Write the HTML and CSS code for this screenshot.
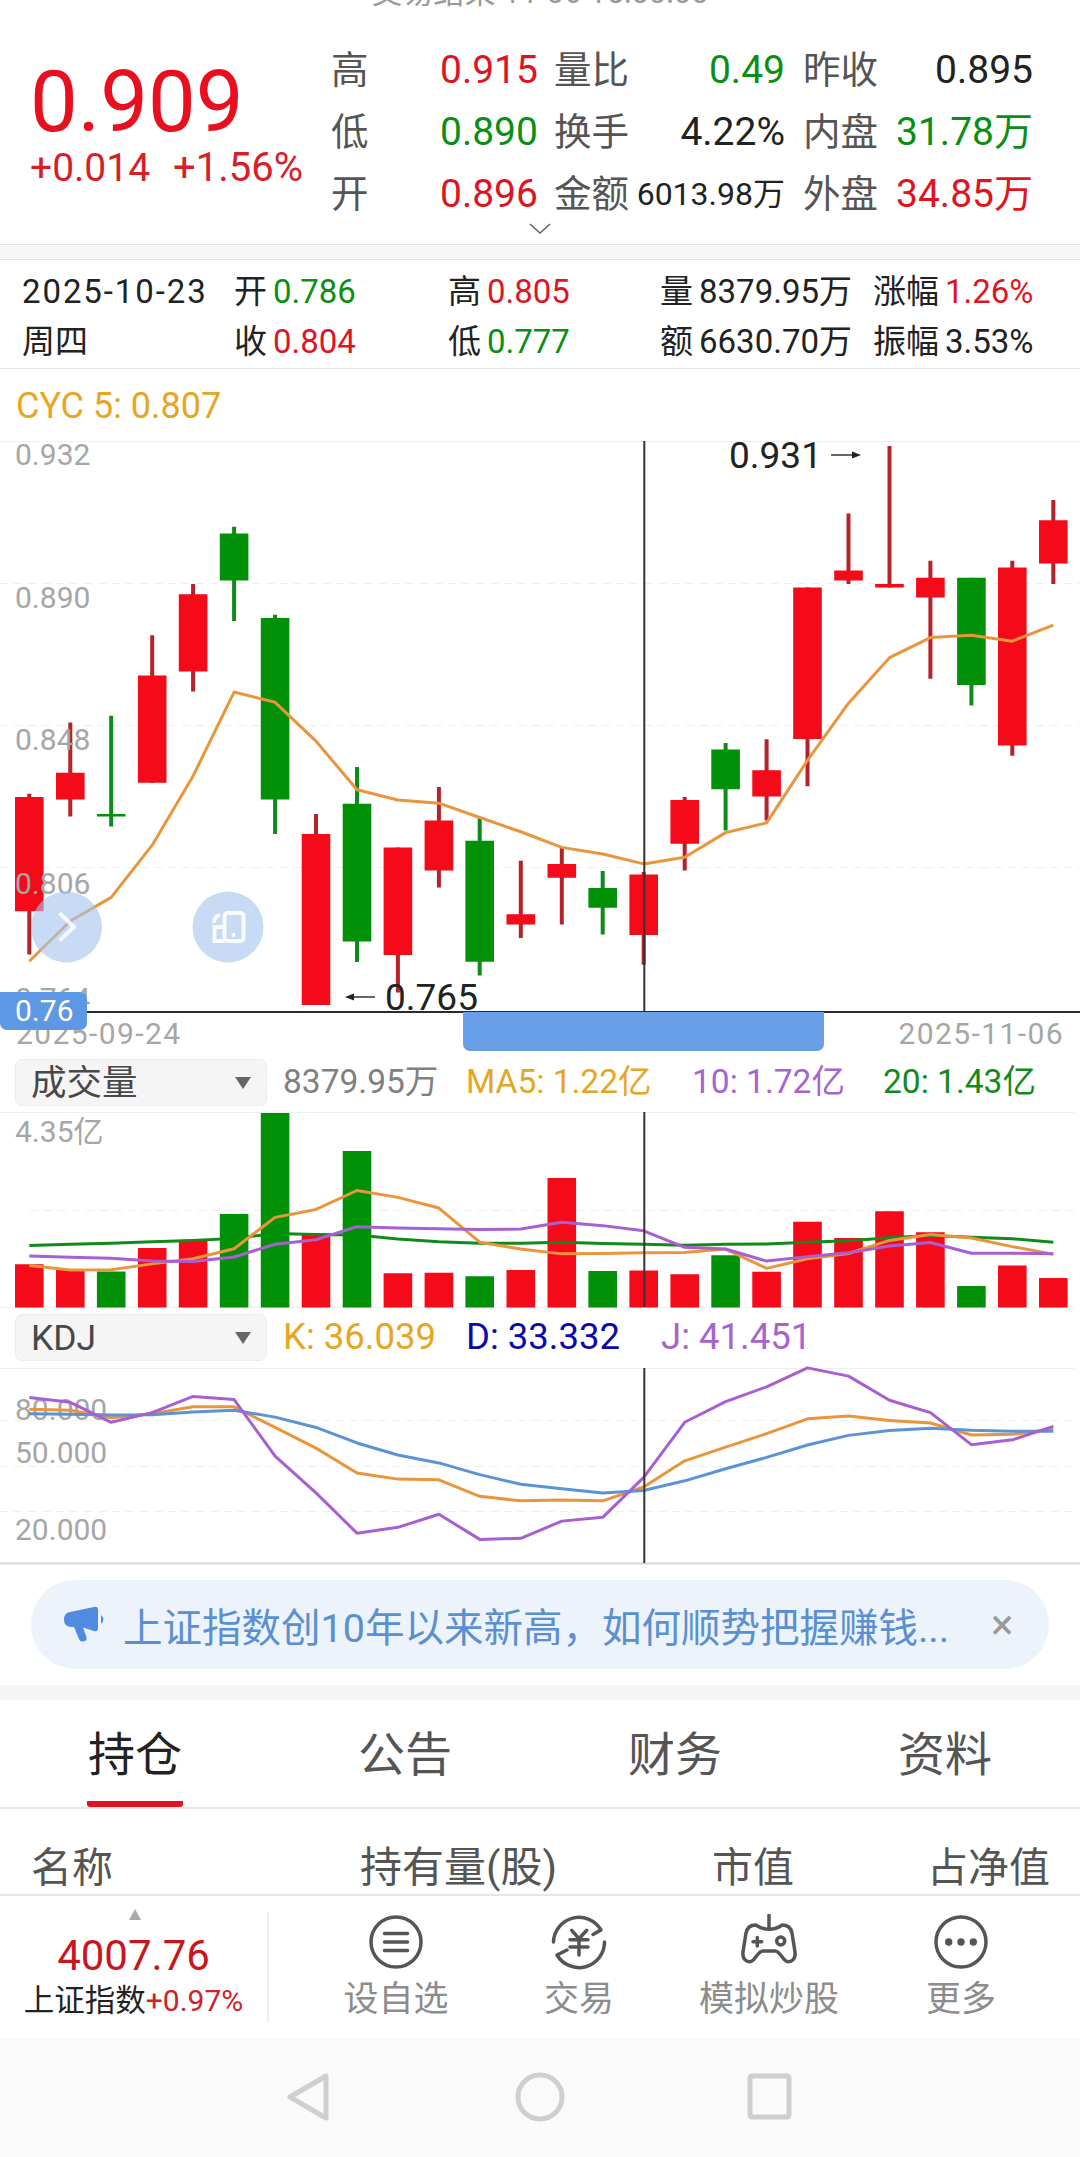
FILE: index.html
```html
<!DOCTYPE html>
<html lang="zh-CN">
<head>
<meta charset="utf-8">
<title>行情</title>
<link rel="stylesheet" href="styles.css">
</head>
<body>
<div class="page">
  <div class="status"><span>交易结束 11-06 15:00:00</span></div>
  <section class="quote">
    <div class="quote-main">
      <div class="price-block">
        <div class="price">0.909</div>
        <div class="change"><span>+0.014</span><span>+1.56%</span></div>
      </div>
      <div class="quote-grid">
        <span class="lbl">高</span><span class="val up">0.915</span><span class="lbl">量比</span><span class="val r down">0.49</span><span class="lbl">昨收</span><span class="val r">0.895</span>
        <span class="lbl">低</span><span class="val down">0.890</span><span class="lbl">换手</span><span class="val r">4.22%</span><span class="lbl">内盘</span><span class="val r down">31.78万</span>
        <span class="lbl">开</span><span class="val up">0.896</span><span class="lbl">金额</span><span class="val r small">6013.98万</span><span class="lbl">外盘</span><span class="val r up">34.85万</span>
      </div>
    </div>
    <svg class="chevron" width="22" height="11" viewBox="0 0 22 11"><path d="M1 1l10 9 10-9" fill="none" stroke="#666" stroke-width="1.6"/></svg>
  </section>
  <div class="band"></div>
  <section class="ohlc">
    <span>2025-10-23</span><span>开<b class="down">0.786</b></span><span>高<b class="up">0.805</b></span><span>量<b>8379.95万</b></span><span>涨幅<b class="up">1.26%</b></span>
    <span>周四</span><span>收<b class="up">0.804</b></span><span>低<b class="down">0.777</b></span><span>额<b>6630.70万</b></span><span>振幅<b>3.53%</b></span>
  </section>
  <div class="cyc">CYC 5: 0.807</div>
  <section class="price-pane">
    <svg class="chart main-chart" width="1080" height="571" viewBox="0 0 1080 571">
      <path class="grid-solid" d="M0 .5H1080"/>
      <path class="grid-dash" d="M0 142.5H1080M0 284.5H1080M0 426.5H1080"/>
      <g transform="translate(0 -11) scale(1 .4464)">
        <path class="wick-up" d="M29.3 815V1175M70.3 655V866M152.2 460V790M193.1 345V586M316 860V1288M397.9 935V1260M438.9 800V1025M520.8 965V1138M561.8 935V1108M643.7 990V1198M684.7 822V987M766.6 693V875M807.5 353V798M848.5 187V345M889.5 36V353M930.4 293V557M1012.3 293V730M1053.3 157V345"/>
        <path class="wick-down" d="M111.2 640V888M234.1 217V428M275.1 414V905M357 755V1192M479.7 870V1222M602.7 988V1130M725.6 701V897M971.4 331V617"/>
        <path class="body-up" d="M29.3 822V1078M70.3 768V828M152.2 550V790M193.1 368V541M316 905V1288M397.9 935V1176M438.9 875V987M520.8 1085V1108M561.8 972V1003M643.7 996V1131M684.7 829V927M766.6 762V821M807.5 353V692M848.5 315V337M889.5 345V353M930.4 331V375M1012.3 308V707M1053.3 202V299"/>
        <path class="body-down" d="M111.2 860V866M234.1 232V337M275.1 421V828M357 837V1146M479.7 920V1191M602.7 1026V1070M725.6 716V805M971.4 331V571"/>
        <polyline class="line ma5" points="29.3,1190 70.3,1100 111.2,1047 152.2,930 193.1,775 234.1,587 275.1,610 316,697 357,806 397.9,829 438.9,836 479.7,868 520.8,900 561.8,935 602.7,950 643.7,972 684.7,957 725.6,902 766.6,880 807.5,740 848.5,612 889.5,510 930.4,465 971.4,460 1012.3,473 1053.3,437"/>
      </g>
      <path class="cursor" d="M644.3 0V570"/>
      <text class="axis-text" x="15" y="24">0.932</text>
      <text class="axis-text" x="15" y="167">0.890</text>
      <text class="axis-text" x="15" y="309">0.848</text>
      <text class="axis-text" x="15" y="453">0.806</text>
      <text class="axis-text" x="15" y="568">0.764</text>
      <circle class="fab" cx="66.500" cy="486" r="35.500"/>
      <circle class="fab" cx="228" cy="486" r="35.500"/>
      <path class="fab-mark" d="M59.500 472l14.500 14-14.500 13.500"/>
      <g class="fab-icon">
        <rect x="224.500" y="472" width="19" height="28" rx="3"/>
        <path d="M224.500 486h-10v14h10"/>
        <path d="M214 482c0-4 2-7 6-8"/>
      </g>
      <circle class="fab-dot" cx="233.500" cy="494" r="2"/>
      <text class="note" x="385" y="569">0.765</text>
      <path class="note-line" d="M347 556H375"/>
      <path class="note-head" d="M345 556l9-3.500v7z"/>
      <text class="note" x="729" y="27">0.931</text>
      <path class="note-line" d="M831 14H859"/>
      <path class="note-head" d="M861 14l-9-3.500v7z"/>
      <path class="axis-line" d="M0 571H1080"/>
    </svg>
    <div class="axis-row">
      <span>2025-09-24</span>
      <span>2025-11-06</span>
      <div class="thumb"></div>
    </div>
    <div class="badge">0.76</div>
  </section>
  <div class="pane-head">
    <div class="select"><span>成交量</span><i class="caret"></i></div>
    <span class="pane-vals">
      <span class="v1 gray">8379.95万</span><span class="v2 orange">MA5: 1.22亿</span><span class="v3 purple">10: 1.72亿</span><span class="v4 green">20: 1.43亿</span>
    </span>
  </div>
  <svg class="chart" width="1080" height="196" viewBox="0 0 1080 196">
    <path class="grid-solid" d="M0 .5H1074M0 195.5H1074"/>
    <path class="grid-dash" d="M30 98.5H1074"/>
    <g transform="translate(0 -72) scale(1 .3444)">
      <path class="body-up" d="M29.3 651V777M70.3 668V777M152.2 604V777M193.1 580V777M316 565V777M397.9 677V777M438.9 676V777M520.8 668V777M561.8 401V777M643.7 669V777M684.7 680V777M766.6 673V777M807.5 528V777M848.5 575V777M889.5 497V777M930.4 558V777M1012.3 655V777M1053.3 691V777"/>
      <polyline class="line ma20" points="29.3,597 70.3,593 111.2,590 152.2,586 193.1,582 234.1,576 275.1,562 316,565 357,566 397.9,578 438.9,586 479.7,590 520.8,590 561.8,587 602.7,591 643.7,593 684.7,596 725.6,593 766.6,592 807.5,587 848.5,583 889.5,574 930.4,568 971.4,573 1012.3,577 1053.3,587"/>
      <path class="body-down" d="M111.2 672V777M234.1 505V777M275.1 212V777M357 322V777M479.7 686V777M602.7 671V777M725.6 625V777M971.4 714V777"/>
      <polyline class="line ma5" points="29.3,655 70.3,668 111.2,667 152.2,650 193.1,635 234.1,606 275.1,515 316,492 357,437 397.9,457 438.9,488 479.7,587 520.8,607 561.8,621 602.7,620 643.7,618 684.7,617 725.6,607 766.6,663 807.5,635 848.5,620 889.5,582 930.4,565 971.4,575 1012.3,600 1053.3,622"/>
      <polyline class="line ma10" points="29.3,627 70.3,631 111.2,634 152.2,642 193.1,643 234.1,630 275.1,593 316,580 357,542 397.9,546 438.9,548 479.7,550 520.8,549 561.8,529 602.7,539 643.7,554 684.7,602 725.6,607 766.6,642 807.5,629 848.5,618 889.5,598 930.4,588 971.4,619 1012.3,619 1053.3,621"/>
    </g>
    <path class="cursor" d="M644.3 0V195"/>
    <text class="axis-text" x="15" y="30">4.35亿</text>
  </svg>
  <div class="pane-head kdj-head">
    <div class="select"><span>KDJ</span><i class="caret"></i></div>
    <span class="pane-vals kdj-vals">
      <span class="v1 orange">K: 36.039</span><span class="v2 navy">D: 33.332</span><span class="v5 purple">J: 41.451</span>
    </span>
  </div>
  <svg class="chart" width="1080" height="196" viewBox="0 0 1080 196">
    <path class="grid-solid" d="M0 .5H1074"/>
    <path class="grid-bottom" d="M0 195.500H1080"/>
    <path class="grid-dash" d="M0 52.500H1074M0 98.500H1074M0 143.500H1074"/>
    <text class="axis-text" x="15" y="52">80.000</text>
    <text class="axis-text" x="15" y="95">50.000</text>
    <text class="axis-text" x="15" y="172">20.000</text>
    <g transform="translate(0 -328) scale(1 .3444)">
      <polyline class="line k" points="29.3,1072 70.3,1075 111.2,1097 152.2,1085 193.1,1065 234.1,1065 275.1,1125 316,1185 357,1257 397.9,1275 438.9,1277 479.7,1325 520.8,1338 561.8,1336 602.7,1338 643.7,1298 684.7,1222 725.6,1182 766.6,1143 807.5,1100 848.5,1092 889.5,1105 930.4,1112 971.4,1147 1012.3,1145 1053.3,1130"/>
      <polyline class="line d" points="29.3,1085 70.3,1087 111.2,1089 152.2,1088 193.1,1080 234.1,1075 275.1,1095 316,1125 357,1170 397.9,1205 438.9,1228 479.7,1262 520.8,1290 561.8,1303 602.7,1315 643.7,1308 684.7,1280 725.6,1245 766.6,1212 807.5,1176 848.5,1148 889.5,1134 930.4,1127 971.4,1133 1012.3,1136 1053.3,1136"/>
      <polyline class="line j" points="29.3,1038 70.3,1052 111.2,1110 152.2,1082 193.1,1035 234.1,1044 275.1,1208 316,1315 357,1432 397.9,1415 438.9,1377 479.7,1450 520.8,1447 561.8,1397 602.7,1386 643.7,1270 684.7,1110 725.6,1050 766.6,1007 807.5,952 848.5,976 889.5,1046 930.4,1082 971.4,1175 1012.3,1161 1053.3,1122"/>
    </g>
    <path class="cursor" d="M644.3 0V195"/>
  </svg>
  <div class="banner-wrap">
    <div class="banner">
      <svg class="horn" width="43" height="37" viewBox="0 0 43 37"><path d="M6 6L30 1Q34 0 34 4V22Q34 26 30 25L19 21.500L22.500 31Q23.500 35 19 35.500Q16 36 15 33L10 21H7Q0 20.500 0 13.500Q0 7 6 6Z" fill="#4f8ce0"/><path d="M37 9Q42 13 37 18Z" fill="#4f8ce0"/></svg>
      <span class="banner-text">上证指数创10年以来新高，如何顺势把握赚钱...</span>
      <span class="banner-close">×</span>
    </div>
  </div>
  <div class="band plain"></div>
  <nav class="tabs">
    <span class="tab active">持仓</span><span class="tab">公告</span><span class="tab">财务</span><span class="tab">资料</span>
  </nav>
  <div class="table-head">
    <span class="th1">名称</span><span class="th2">持有量(股)</span><span class="th3">市值</span><span class="th4">占净值</span>
  </div>
  <div class="bottom-bar">
    <div class="index">
      <i class="index-up"></i>
      <div class="index-val">4007.76</div>
      <div class="index-name">上证指数<span>+0.97%</span></div>
    </div>
    <div class="actions">
      <div class="action a1">
        <svg width="56" height="56" viewBox="0 0 56 56"><g class="ico"><circle cx="28" cy="28" r="25"/><path d="M16.500 19.500h23M16.500 28h23M16.500 36.500h23"/></g></svg>
        <span>设自选</span>
      </div>
      <div class="action a2">
        <svg width="56" height="56" viewBox="0 0 56 56"><g class="ico"><path d="M2.500 28A25.500 25.500 0 0 1 50 16L42 20.500"/><path d="M53.500 28A25.500 25.500 0 0 1 6 41L16 36"/><path d="M20.700 16.300L28 24.700L35.700 16.300M19 25.700H37M19 33H37M28 24.700V41"/></g></svg>
        <span>交易</span>
      </div>
      <div class="action a3">
        <svg width="56" height="56" viewBox="0 0 56 56"><g class="ico"><path d="M28 1V14"/><path d="M14.700 11Q21 15.300 28 15.300T41.300 11C47 11 50 14 51 19L54 38C55 46 49 49 45 47C41 45 39 37 34 37H22C17 37 15 45 11 47C7 49 1 46 2 38L5 19C6 14 9 11 14.700 11Z"/><path d="M12 27.700h8.600M16.300 23.400v8.600"/><circle cx="39.700" cy="27" r="4"/></g></svg>
        <span>模拟炒股</span>
      </div>
      <div class="action a4">
        <svg width="56" height="56" viewBox="0 0 56 56"><g class="ico"><circle cx="28" cy="28" r="25"/></g><circle class="dot" cx="15.700" cy="28" r="3.700"/><circle class="dot" cx="28" cy="28" r="3.700"/><circle class="dot" cx="40.300" cy="28" r="3.700"/></svg>
        <span>更多</span>
      </div>
    </div>
  </div>
  <div class="sysnav">
    <svg width="1080" height="120" viewBox="0 0 1080 120"><g class="sys"><path d="M326 39v42l-36-21z"/><circle cx="540" cy="60" r="22"/><rect x="750" y="39" width="39" height="41" rx="2"/></g></svg>
  </div>
</div>
</body>
</html>
```

FILE: styles.css
```css
* { box-sizing: border-box; }
html, body { margin: 0; padding: 0; background: #fff; }
body { font-family: Roboto, "Noto Sans CJK SC", sans-serif; color: #222; }
.page { width: 1080px; height: 2157px; overflow: hidden; }
.up { color: #e0141f; }
.down { color: #0a8f14; }
.gray { color: #808080; }
.orange { color: #e6a623; }
.purple { color: #a763cf; }
.green { color: #128a1a; }
.navy { color: #0a0aa8; }

.status { height: 8px; display: flex; justify-content: center; align-items: flex-end; overflow: hidden; font-size: 31px; line-height: 31px; color: #9a9a9a; }
.status span { display: block; }

.quote { height: 236px; padding-top: 31px; display: flex; flex-direction: column; }
.quote-main { display: flex; }
.price-block { width: 332px; padding: 21px 0 0 30px; }
.price { font-size: 85px; line-height: 84px; color: #e8101f; }
.change { display: flex; gap: 23px; margin-top: 2px; font-size: 40px; line-height: 44px; color: #d81e28; white-space: nowrap; }
.change span:first-child { font-size: 39px; }
.quote-grid { display: grid; grid-template-columns: 109px 114px 75px 156px 18px 75px 155px; grid-auto-rows: 62px; align-items: center; margin-left: -1px; }
.quote-grid .lbl { font-size: 37.500px; line-height: 62px; color: #555; white-space: nowrap; }
.quote-grid .val { font-size: 39px; line-height: 62px; white-space: nowrap; }
.quote-grid .r { text-align: right; }
.quote-grid .lbl:nth-child(6n+5) { grid-column: 6; }
.quote-grid .val.r:nth-child(6n+4) { grid-column: 4; }
.quote-grid .val:nth-child(6n) { grid-column: 7; }
.quote-grid .small { font-size: 32px; }
.chevron { display: block; margin: -2px auto 0; }

.band { height: 16px; background: #f6f6f6; border-top: 1px solid #e2e2e2; border-bottom: 1px solid #e2e2e2; }
.band.plain { height: 15px; border: 0; background: #f5f5f5; }

.ohlc { height: 109px; padding: 7px 0 0 22px; display: grid; grid-template-columns: 212px 214px 212px 213px 170px; grid-auto-rows: 50px; align-items: center; font-size: 33px; line-height: 50px; border-bottom: 1px solid #e4e4e4; white-space: nowrap; color: #222; }
.ohlc b { font-weight: 400; margin-left: 6px; }
.ohlc span:first-child { letter-spacing: 1.900px; }

.cyc { height: 72px; padding: 14px 0 0 16px; font-size: 36px; line-height: 46px; color: #e6a623; }

.chart { display: block; overflow: visible; }
.grid-solid { stroke: #efefef; stroke-width: 1; fill: none; }
.grid-bottom { stroke: #d8d8d8; stroke-width: 2; fill: none; }
.grid-dash { stroke: #efefef; stroke-width: 1; stroke-dasharray: 8 6; fill: none; }
.wick-up { stroke: #b4222a; stroke-width: 4; fill: none; }
.wick-down { stroke: #0f8a1c; stroke-width: 4; fill: none; }
.body-up { stroke: #f40a18; stroke-width: 28.6; fill: none; }
.body-down { stroke: #009108; stroke-width: 28.6; fill: none; }
.line { fill: none; stroke-width: 3; vector-effect: non-scaling-stroke; stroke-linejoin: round; }
.ma5, .k { stroke: #e8953c; }
.ma10, .j { stroke: #a75fd2; }
.ma20 { stroke: #128a1a; }
.d { stroke: #5b93d6; }
.cursor { stroke: #333; stroke-width: 2; fill: none; }
.axis-line { stroke: #2a2a2a; stroke-width: 2; fill: none; }
.axis-text { font-size: 30px; fill: #a6a6a6; }
.note { font-size: 37px; fill: #222; }
.note-line { stroke: #333; stroke-width: 1.500; fill: none; }
.note-head { fill: #222; }
.fab { fill: rgba(165, 197, 238, .62); }
.fab-mark { stroke: #fff; stroke-width: 4; fill: none; opacity: .8; }
.fab-icon { stroke: #fff; stroke-width: 4; fill: none; opacity: .9; }
.fab-dot { fill: #fff; }

.price-pane { position: relative; }
.axis-row { position: relative; height: 46px; padding: 0 16px; display: flex; justify-content: space-between; font-size: 30px; line-height: 44px; letter-spacing: 1.400px; color: #a6a6a6; }
.thumb { position: absolute; left: 463px; top: 0; width: 361px; height: 39px; background: #699fe9; border-radius: 0 0 7px 7px; }
.badge { position: absolute; left: 0; top: 551px; width: 87px; height: 38px; background: #5d98e4; border-radius: 0 7px 7px 7px; color: #fff; font-size: 30px; line-height: 38px; padding-left: 15px; }

.pane-head { height: 54px; padding-top: 1px; position: relative; font-size: 33.500px; line-height: 46px; white-space: nowrap; }
.kdj-head { height: 60px; padding-top: 6px; }
.select { position: absolute; left: 15px; width: 252px; height: 47px; background: #f5f5f5; border: 1px solid #ececec; border-radius: 7px; padding-left: 15px; font-size: 35.500px; line-height: 46px; color: #484848; }
.caret { position: absolute; right: 15px; top: 17px; border: 8px solid transparent; border-top: 12px solid #666; border-bottom: 0; }
.pane-vals { display: block; }
.pane-vals > span { position: absolute; }
.kdj-vals { font-size: 36.500px; }
.v1 { left: 283px; }
.v2 { left: 466px; }
.v3 { left: 692px; }
.v4 { left: 883px; }
.v5 { left: 661px; }

.banner-wrap { height: 121px; padding: 16px 31px 0; }
.banner { height: 89px; border-radius: 45px; background: #ecf3fb; display: flex; align-items: center; padding-left: 33px; position: relative; }
.horn { flex: none; }
.banner-text { margin-left: 16px; font-size: 39.500px; color: #5a8fd1; white-space: nowrap; }
.banner-close { position: absolute; left: 960px; font-size: 42px; color: #999; }

.tabs { height: 109px; display: grid; grid-template-columns: repeat(4, 270px); border-bottom: 2px solid #e6e6e6; }
.tab { justify-self: center; width: 96px; height: 107px; padding-top: 25px; font-size: 47px; line-height: 60px; color: #555; text-align: center; white-space: nowrap; }
.tab.active { color: #222; border-bottom: 6px solid #e0131f; border-radius: 0 0 3px 3px; }

.table-head { height: 87px; border-bottom: 2px solid #e6e6e6; position: relative; font-size: 41px; line-height: 60px; color: #555; white-space: nowrap; }
.table-head span { position: absolute; top: 29px; }
.th1 { left: 31px; }
.table-head .th2 { left: 360px; font-size: 42px; }
.th3 { left: 712px; }
.th4 { left: 927px; }

.bottom-bar { height: 141px; display: flex; }
.index { width: 269px; height: 111px; margin-top: 16px; border-right: 2px solid #eee; text-align: center; position: relative; padding-top: 21px; }
.index-up { position: absolute; left: 129px; top: -3px; border: 6px solid transparent; border-bottom: 11px solid #aaa; border-top: 0; }
.index-val { font-size: 42px; line-height: 46px; color: #c8161d; }
.index-name { font-size: 30.500px; line-height: 44px; color: #222; white-space: nowrap; }
.index-name span { color: #d02028; font-size: 30px; }
.actions { position: relative; flex: 1; }
.action { position: absolute; top: 18px; width: 160px; display: flex; flex-direction: column; align-items: center; font-size: 35px; line-height: 48px; color: #8c8c8c; white-space: nowrap; }
.action svg { display: block; }
.action span { margin-top: 6px; }
.a1 { left: 47px; }
.a2 { left: 230px; }
.a3 { left: 420px; }
.a4 { left: 612px; }
.ico { fill: none; stroke: #555; stroke-width: 3.500; stroke-linecap: round; stroke-linejoin: round; }
.dot { fill: #555; }
.sysnav { height: 120px; background: #fafafa; }
.sysnav svg { display: block; }
.sys { fill: none; stroke: #cfcfcf; stroke-width: 5; stroke-linejoin: round; }
```
